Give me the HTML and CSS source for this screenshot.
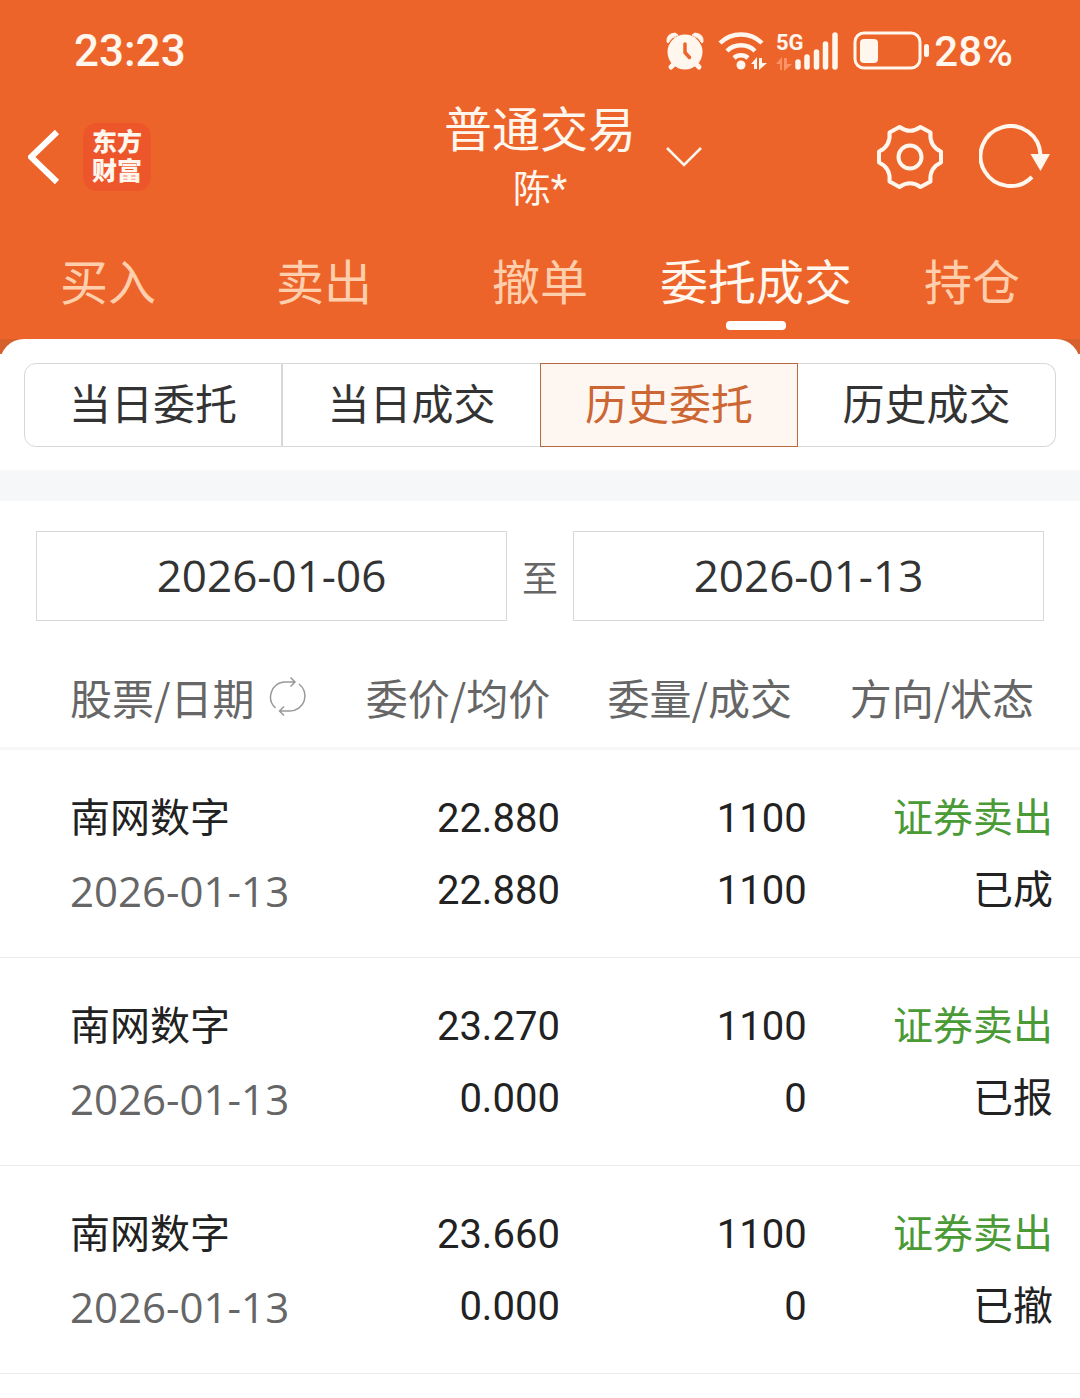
FILE: index.html
```html
<!DOCTYPE html>
<html lang="zh-CN">
<head>
    <meta charset="UTF-8">
    <meta name="viewport" content="width=device-width, initial-scale=1.0">
    <title>普通交易</title>
    <link rel="stylesheet" href="styles.css">
</head>
<body>

    <header class="header">
        <!-- Status bar -->
        <div class="status-bar">
            <span class="clock">23:23</span>
            <div class="status-icons">
                <svg class="alarm" width="38" height="40" viewBox="0 0 38 40">
                    <path d="M1 11 Q0 3 9 2 L12 4 Q5 6 2 12 Z M37 11 Q38 3 29 2 L26 4 Q33 6 36 12 Z" fill="#fff6ee" stroke="#fff6ee" stroke-linejoin="round"/>
                    <path d="M9 32 L5 36 M29 32 L33 36" stroke="#fff6ee" stroke-width="5" stroke-linecap="round"/>
                    <circle cx="19" cy="21" r="17.500" fill="#fff6ee"/>
                    <path d="M19 13 V21.500 L23.500 26.500" fill="none" stroke="#ed642a" stroke-width="3.500" stroke-linecap="round" stroke-linejoin="round"/>
                </svg>
                <svg class="wifi" width="49" height="40" viewBox="0 0 49 40">
                    <path d="M2 12 A30 30 0 0 1 44 12 M9 20 A20 20 0 0 1 37 20 M16 27 A10.500 10.500 0 0 1 30 27" fill="none" stroke="#fff6ee" stroke-width="4.500"/>
                    <circle cx="23" cy="34" r="4.500" fill="#fff6ee"/>
                    <path d="M33 33 L39 26 V38 H36 V33 Z M41 27 H44 V32 H49 L41 39 Z" fill="#fff6ee"/>
                </svg>
                <svg class="signal" width="63" height="40" viewBox="0 0 63 40">
                    <text class="network" x="0" y="19">5G</text>
                    <path d="M0 33 L6 26 V39 H4 V33 Z M8 27 H11 V33 H16 L8 40 Z" fill="#ff9264"/>
                    <path d="M22 31 V36 M31 26 V36 M40.500 21 V36 M49.500 13 V36 M59 4 V36" stroke="#fff6ee" stroke-width="5.500" stroke-linecap="round"/>
                </svg>
                <svg class="battery" width="76" height="40" viewBox="0 0 76 40">
                    <rect x="2" y="2" width="65" height="35" rx="9" fill="none" stroke="#fff6ee" stroke-width="3"/>
                    <rect x="7" y="8" width="18" height="24" rx="4" fill="#fff6ee"/>
                    <rect x="71" y="13" width="5" height="13" rx="2.500" fill="#fff6ee"/>
                </svg>
                <span class="percent">28%</span>
            </div>
        </div>

        <!-- Title bar -->
        <div class="title-bar">
            <div class="title-left">
                <button class="icon-button" aria-label="返回">
                    <svg width="33" height="56" viewBox="0 0 33 56">
                        <path d="M29 3 L3 28 L29 53" fill="none" stroke="#fff" stroke-width="6"/>
                    </svg>
                </button>
                <div class="logo"><span>东方</span><span>财富</span></div>
            </div>
            <div class="title">
                <h1>普通交易</h1>
                <p>陈*</p>
            </div>
            <div class="title-right">
                <button class="icon-button" aria-label="切换账户">
                    <svg width="36" height="22" viewBox="0 0 36 22">
                        <path d="M1 2 L18 19 L35 2" fill="none" stroke="#fff6ee" stroke-width="2.500"/>
                    </svg>
                </button>
                <div class="actions">
                    <button class="icon-button" aria-label="设置">
                        <svg width="66" height="66" viewBox="0 0 66 66">
                            <path d="M22.500 3 Q33 10.500 43.500 3 L53.500 8.500 Q52 22 64 27.500 V38.500 Q52 44 53.500 57.500 L43.500 63 Q33 55.500 22.500 63 L12.500 57.500 Q14 44 2 38.500 V27.500 Q14 22 12.500 8.500 Z" fill="none" stroke="#fff6ee" stroke-width="4" stroke-linejoin="round"/>
                            <circle cx="33" cy="33" r="11.500" fill="none" stroke="#fff6ee" stroke-width="4"/>
                        </svg>
                    </button>
                    <button class="icon-button" aria-label="刷新">
                        <svg width="73" height="66" viewBox="0 0 73 66">
                            <path d="M53 53 A30 30 0 1 1 61.500 31" fill="none" stroke="#fff6ee" stroke-width="4"/>
                            <path d="M51.500 30 H71 L61.500 47 Z" fill="#fff6ee"/>
                        </svg>
                    </button>
                </div>
            </div>
        </div>

        <!-- Main tabs -->
        <nav class="tabs">
            <a href="#">买入</a>
            <a href="#">卖出</a>
            <a href="#">撤单</a>
            <a href="#" class="active">委托成交</a>
            <a href="#">持仓</a>
        </nav>
    </header>

    <main>
        <div class="sheet-top">
            <div class="sheet">
                <div class="segments">
                    <button>当日委托</button>
                    <button>当日成交</button>
                    <button class="active">历史委托</button>
                    <button>历史成交</button>
                </div>
            </div>
        </div>

        <!-- Date range -->
        <form class="date-range">
            <input type="text" aria-label="开始日期" value="2026-01-06">
            <span>至</span>
            <input type="text" aria-label="结束日期" value="2026-01-13">
        </form>

        <!-- Order history -->
        <table class="orders">
            <thead>
                <tr>
                    <th class="stock">
                        <div class="sort">
                            股票/日期
                            <svg width="39" height="41" viewBox="0 0 39 41" fill="none" stroke="#999" stroke-width="1.500">
                                <path d="M7.500 32 A15 15 0 0 1 16 6 H27 M22.500 1.500 L27 6 L22.500 10.500"/>
                                <path d="M31 8 A15 15 0 0 1 22 35 H11.500 M16 30.500 L11.500 35 L16 39.500"/>
                            </svg>
                        </div>
                    </th>
                    <th class="price">委价/均价</th>
                    <th class="volume">委量/成交</th>
                    <th class="side">方向/状态</th>
                </tr>
            </thead>
            <tbody>
                <tr>
                    <td class="stock"><span>南网数字</span><span class="date">2026-01-13</span></td>
                    <td class="price"><span>22.880</span><span>22.880</span></td>
                    <td class="volume"><span>1100</span><span>1100</span></td>
                    <td class="side"><span class="sell">证券卖出</span><span>已成</span></td>
                </tr>
                <tr>
                    <td class="stock"><span>南网数字</span><span class="date">2026-01-13</span></td>
                    <td class="price"><span>23.270</span><span>0.000</span></td>
                    <td class="volume"><span>1100</span><span>0</span></td>
                    <td class="side"><span class="sell">证券卖出</span><span>已报</span></td>
                </tr>
                <tr>
                    <td class="stock"><span>南网数字</span><span class="date">2026-01-13</span></td>
                    <td class="price"><span>23.660</span><span>0.000</span></td>
                    <td class="volume"><span>1100</span><span>0</span></td>
                    <td class="side"><span class="sell">证券卖出</span><span>已撤</span></td>
                </tr>
            </tbody>
        </table>
    </main>

</body>
</html>
```
FILE: styles.css
```css
* {
    margin: 0;
    padding: 0;
    box-sizing: border-box;
}

body {
    background: #fff;
    color: #222;
    font-family: Roboto, "Noto Sans CJK SC", sans-serif;
    font-size: 40px;
}

button,
input {
    font-family: inherit;
    color: inherit;
}

svg {
    display: block;
}

.header {
    background: #ed642a;
    color: #fff6ee;
}

/* Status bar */
.status-bar {
    display: flex;
    justify-content: space-between;
    align-items: center;
    height: 96px;
    padding: 6px 67px 0 74px;
    font-size: 44px;
    font-weight: 500;
}

.status-icons {
    display: flex;
    align-items: center;
}

.alarm,
.signal {
    margin-right: 14px;
}

.wifi {
    margin-right: 9px;
}

.battery {
    margin-right: 5px;
}

.percent {
    font-size: 42px;
}

.signal {
    overflow: visible;
}

.network {
    fill: #fff6ee;
    font-size: 22px;
    font-weight: 700;
}

/* Title bar */
.title-bar {
    display: grid;
    grid-template-columns: 1fr auto 1fr;
    align-items: center;
    padding: 0 28px;
}

.title-left,
.title-right,
.actions {
    display: flex;
    align-items: center;
}

.title-left {
    gap: 22px;
}

.title-right {
    justify-content: space-between;
    padding-left: 30px;
}

.actions {
    gap: 36px;
}

.icon-button {
    background: none;
    border: none;
    cursor: pointer;
}

.logo {
    display: flex;
    flex-direction: column;
    justify-content: center;
    width: 68px;
    height: 68px;
    border-radius: 14px;
    background: #ed552a;
    font-size: 25px;
    font-weight: 900;
    line-height: 29px;
    text-align: center;
}

.title {
    padding-top: 6px;
    text-align: center;
}

.title h1 {
    font-size: 48px;
    font-weight: 400;
    line-height: 58px;
}

.title p {
    font-size: 38px;
    line-height: 58px;
}

/* Main tabs */
.tabs {
    display: grid;
    grid-template-columns: repeat(5, 1fr);
    padding-top: 28px;
    height: 121px;
}

.tabs a {
    display: flex;
    flex-direction: column;
    align-items: center;
    color: #ffcfad;
    font-size: 48px;
    line-height: 75px;
    text-decoration: none;
}

.tabs .active {
    color: #fff6ee;
}

.tabs .active::after {
    content: "";
    width: 60px;
    height: 9px;
    border-radius: 4px;
    background: #fff;
}

/* White sheet with round corners under the header */
.sheet-top {
    background: linear-gradient(#d5602b 15px, #fff 15px);
    border-bottom: 31px solid #f6f7f9;
}

.sheet {
    padding: 24px 24px 23px;
    border-radius: 24px 24px 0 0;
    background: #fff;
}

.segments {
    display: grid;
    grid-template-columns: repeat(4, 1fr);
}

.segments button {
    height: 84px;
    padding-bottom: 7px;
    border: 1px solid #d8d8d8;
    background: #fff;
    color: #333;
    font-size: 42px;
    cursor: pointer;
}

.segments button:first-child {
    border-radius: 12px 0 0 12px;
}

.segments button:last-child {
    border-left: none;
    border-radius: 0 12px 12px 0;
}

.segments button:nth-child(2) {
    border-right: none;
}

.segments .active {
    border-color: #b8693f;
    background: #fdf6f1;
    color: #cc6633;
}

/* Date range */
.date-range {
    display: flex;
    align-items: center;
    padding: 30px 36px;
}

.date-range input {
    flex: 1;
    min-width: 0;
    height: 90px;
    padding-bottom: 2px;
    border: 1px solid #d8d8d8;
    color: #333;
    font-family: "Open Sans", sans-serif;
    font-size: 44px;
    text-align: center;
}

.date-range span {
    width: 66px;
    color: #666;
    font-size: 36px;
    text-align: center;
}

/* Order history */
.orders {
    width: 100%;
    border-collapse: collapse;
    table-layout: fixed;
}

.orders th {
    height: 97px;
    padding-bottom: 4px;
    border-bottom: 3px solid #f6f7f8;
    color: #666;
    font-family: "Noto Sans CJK SC", sans-serif;
    font-size: 42px;
    font-weight: 400;
    white-space: nowrap;
}

.orders td {
    padding: 33px 0 30px;
    border-bottom: 1px solid #ebebeb;
    text-align: right;
}

.orders td span {
    display: block;
    line-height: 72px;
}

.orders .stock {
    width: 31.2%;
    padding-left: 70px;
    text-align: left;
}

.orders .price,
.orders .volume {
    width: 22.4%;
}

.orders th.side {
    padding-right: 17px;
}

.orders td.price {
    padding-right: 19px;
}

.orders td.volume {
    padding-right: 14px;
}

.orders td.side {
    padding-right: 27px;
}

.orders .date {
    color: #666;
    font-family: "Open Sans", sans-serif;
    font-size: 42px;
}

.orders .sell {
    color: #4a9a35;
}

.sort {
    display: flex;
    align-items: center;
    gap: 14px;
}
```
